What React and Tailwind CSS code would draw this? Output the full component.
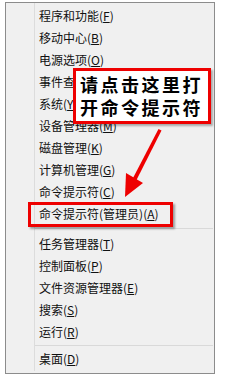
import React from "react";

const groups = [
  [
    ["程序和功能", "F"],
    ["移动中心", "B"],
    ["电源选项", "O"],
    ["事件查看器", "V"],
    ["系统", "Y"],
    ["设备管理器", "M"],
    ["磁盘管理", "K"],
    ["计算机管理", "G"],
    ["命令提示符", "C"],
    ["命令提示符(管理员)", "A"],
  ],
  [
    ["任务管理器", "T"],
    ["控制面板", "P"],
    ["文件资源管理器", "E"],
    ["搜索", "S"],
    ["运行", "R"],
  ],
  [["桌面", "D"]],
];

function Item({ label, k }) {
  return (
    <div className="h-[22px] flex items-center pl-[4px] text-[12px] leading-[22px] text-[#111] whitespace-nowrap">
      <span>{label}</span>
      <span>
        (<span className="underline underline-offset-[1px]">{k}</span>)
      </span>
    </div>
  );
}

export default function App() {
  return (
    <div
      className="relative w-[235px] h-[377px] bg-white overflow-hidden"
      style={{ fontFamily: '"Noto Sans CJK SC", "Noto Sans", sans-serif' }}
    >
      <div className="ml-[5px] mt-[2px] w-[210px] h-[372px] border border-[#8c8c8c] bg-[#f0f0f0] flex">
        <div className="w-[29px] shrink-0 border-r border-[#dcdcdc] mb-[2px]" />
        <div className="flex-1 pt-[2px] pr-[1px]">
          {groups[0].map(([l, k]) => (
            <Item key={l} label={l} k={k} />
          ))}
          <div className="h-[8px] flex items-start pt-[3px]">
            <div className="h-px w-full bg-[#d9d9d9]" />
          </div>
          {groups[1].map(([l, k]) => (
            <Item key={l} label={l} k={k} />
          ))}
          <div className="h-[5px] flex items-start pt-[2px]">
            <div className="h-px w-full bg-[#d9d9d9]" />
          </div>
          {groups[2].map(([l, k]) => (
            <Item key={l} label={l} k={k} />
          ))}
        </div>
      </div>

      {/* callout */}
      <div className="absolute left-[73px] top-[68px] w-[138px] h-[56px] border-[3px] border-[#ee0000] bg-white shadow-[2px_2px_2px_rgba(0,0,0,0.3)] flex flex-col justify-center pl-[4px]">
        <div className="text-[18px] leading-[23px] font-semibold text-black tracking-[2.5px] whitespace-nowrap">
          请点击这里打
        </div>
        <div className="text-[18px] leading-[23px] font-semibold text-black tracking-[2.5px] whitespace-nowrap">
          开命令提示符
        </div>
      </div>

      {/* highlight box */}
      <div className="absolute left-[28px] top-[202px] w-[145px] h-[25px] border-[3px] border-[#ee0000] shadow-[2px_2px_2px_rgba(0,0,0,0.35)]" />

      {/* arrow */}
      <svg className="absolute left-0 top-0" width="235" height="377" viewBox="0 0 235 377">
        <polygon
          points="158.5,129 161.5,130.5 136.5,180 133,178"
          fill="#ee0000"
        />
        <polygon points="125,197 126,173 143,183" fill="#ee0000" />
      </svg>
    </div>
  );
}
